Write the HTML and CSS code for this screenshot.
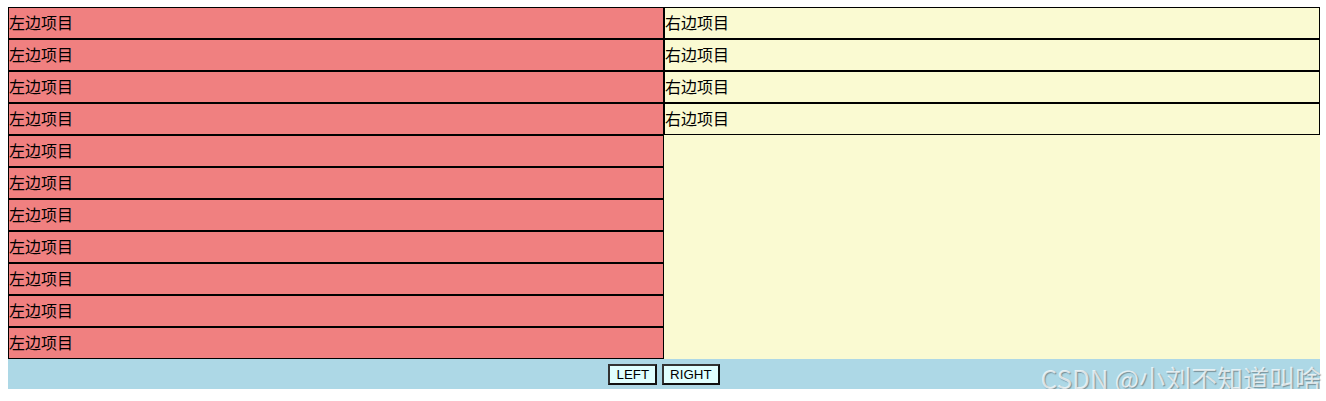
FILE: index.html
```html
<!DOCTYPE html>
<html lang="zh">
<head>
<meta charset="utf-8">
<title>Flex</title>
<link rel="stylesheet" href="styles.css">
</head>
<body>
<div class="wrap">
  <div class="cols">
    <div class="col left">
      <div class="item">左边项目</div>
      <div class="item">左边项目</div>
      <div class="item">左边项目</div>
      <div class="item">左边项目</div>
      <div class="item">左边项目</div>
      <div class="item">左边项目</div>
      <div class="item">左边项目</div>
      <div class="item">左边项目</div>
      <div class="item">左边项目</div>
      <div class="item">左边项目</div>
      <div class="item">左边项目</div>
    </div>
    <div class="col right">
      <div class="item">右边项目</div>
      <div class="item">右边项目</div>
      <div class="item">右边项目</div>
      <div class="item">右边项目</div>
    </div>
  </div>
  <div class="bar">
    <button class="btn">LEFT</button>
    <button class="btn">RIGHT</button>
  </div>
  <div class="mark">CSDN @小刘不知道叫啥</div>
</div>
</body>
</html>
```
FILE: styles.css
```css
html, body {
  margin: 0;
  padding: 0;
  background: #ffffff;
}
body {
  padding: 7px 0 0 8px;
  font-family: "Liberation Sans", "Noto Sans CJK SC", sans-serif;
  font-size: 16px;
  color: #000;
}
.wrap {
  position: relative;
  width: 1312px;
}
.cols {
  display: flex;
}
.col {
  width: 656px;
  display: flex;
  flex-direction: column;
}
.left {
  background: #f08080;
}
.right {
  background: #fafad2;
}
.item {
  box-sizing: border-box;
  height: 32px;
  border: 1px solid #000;
  line-height: 28px;
  padding: 0;
  font-family: "Noto Sans CJK SC", sans-serif;
}
.left .item {
  background: #f08080;
}
.right .item {
  background: #fafad2;
}
.bar {
  height: 30px;
  background: #add8e6;
  display: flex;
  justify-content: center;
  align-items: center;
  gap: 5px;
}
.btn {
  box-sizing: border-box;
  height: 21px;
  padding: 0 6px;
  margin: 0;
  background: #e0ffff;
  border: 2px solid #000;
  border-color: #333 #111 #111 #333;
  font-family: "Liberation Sans", sans-serif;
  font-size: 13.333px;
  color: #000;
  line-height: 17px;
}
.mark {
  position: absolute;
  right: -1px;
  bottom: -5px;
  font-family: "Noto Sans CJK SC", "Liberation Sans", sans-serif;
  font-size: 26px;
  line-height: 32px;
  color: rgba(255, 255, 255, 0.72);
  text-shadow: 1px 1px 1px rgba(60, 60, 60, 0.45);
  white-space: nowrap;
}
```
